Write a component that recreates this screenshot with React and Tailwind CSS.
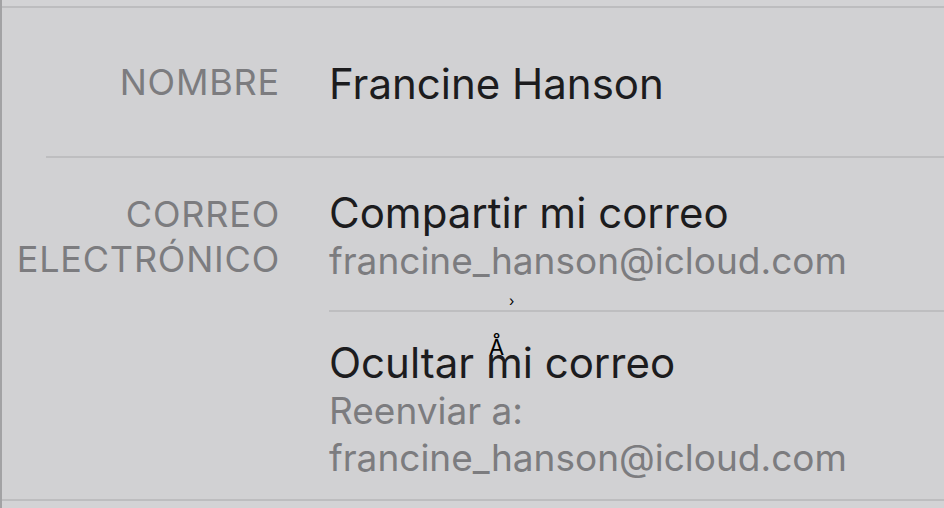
export default function App() {
  return (
    <div
      className="relative w-[944px] h-[508px] overflow-hidden bg-[#d1d1d3] border-l-2 border-[#a2a2a4] text-[#1c1c1e]"
      style={{ fontFamily: "Inter, 'Noto Sans', sans-serif" }}
    >
      {/* top strip */}
      <div className="h-[6px] bg-[#d3d3d5]" />
      <div className="h-[2px] bg-[#bdbdbf]" />

      {/* Nombre */}
      <div className="flex items-center h-[148px]">
        <div className="w-[278px] text-right text-[36px] tracking-[0.8px] text-[#7c7c7f]">NOMBRE</div>
        <div className="ml-[49px] text-[42px] pt-[2px]">Francine Hanson</div>
      </div>
      <div className="ml-[44px] h-[2px] bg-[#bebec0]" />

      {/* Correo electronico */}
      <div className="flex">
        <div className="w-[278px] pt-[34px] text-right text-[36px] leading-[45px] tracking-[0.8px] text-[#7c7c7f]">
          CORREO
          <br />
          ELECTRÓNICO
        </div>
        <div className="ml-[49px] flex-1 flex flex-col">
          <div className="pt-[31px] pb-[25px]">
            <div className="text-[42px] leading-[48px]">Compartir mi correo</div>
            <div className="text-[37px] leading-[48px] text-[#7c7c7f]">francine_hanson@icloud.com</div>
          </div>
          <div className="h-[2px] bg-[#bebec0]" />
          <div className="pt-[27px]">
            <div className="text-[42px] leading-[48px]">Ocultar mi correo</div>
            <div className="text-[37px] leading-[47px] text-[#7c7c7f]">Reenviar a:</div>
            <div className="text-[37px] leading-[47px] text-[#7c7c7f]">francine_hanson@icloud.com</div>
          </div>
        </div>
      </div>

      {/* bottom line */}
      <div className="absolute left-0 right-0 top-[499px] h-[2px] bg-[#bdbdbf]" />
      <div className="absolute left-0 right-0 top-[501px] bottom-0 bg-[#d3d3d5]" />

      {/* stray glyphs */}
      <span className="absolute left-[507px] top-[294px] text-[14px] leading-none text-black">›</span>
      <span className="absolute left-[487px] top-[336px] text-[22px] leading-none text-black">Å</span>
    </div>
  );
}
